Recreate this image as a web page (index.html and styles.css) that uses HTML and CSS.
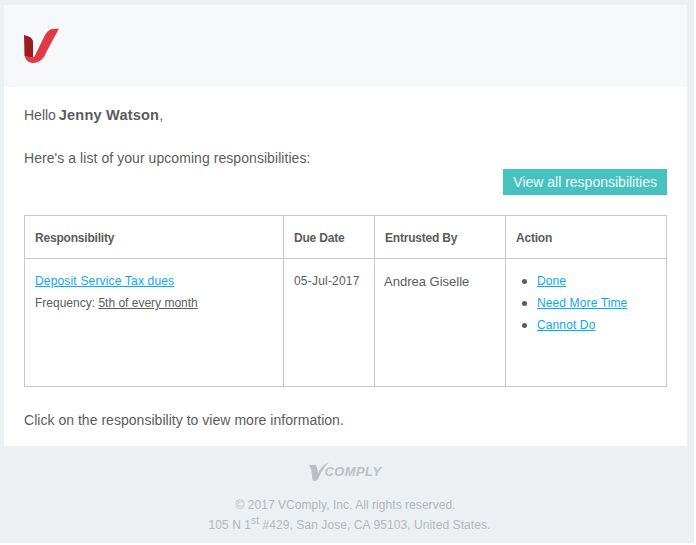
FILE: index.html
```html
<!DOCTYPE html>
<html lang="en">
<head>
<meta charset="utf-8">
<title>VComply</title>
<link rel="stylesheet" href="styles.css">
</head>
<body>
<div class="page">
<div class="mail">
  <header class="head">
    <svg class="logo" width="36" height="36" viewBox="0 0 36 36">
      <path d="M0 7 C3 8 9 9 9 14 L9 29 C6 29.500 3 29 0.500 28 Z" fill="#9c1c22"/>
      <path d="M35 0.500 L28 1 C25 1.500 22 5 20.500 8 L10.500 28.500 L9 29 C6 29.500 3 29 0.800 27.500 C1 32 5 35 9 35 C15 35 19 31 21 27 C25 19 31 8 35 0.500 Z" fill="#e03a42"/>
    </svg>
  </header>
  <main class="body">
    <p class="hello">Hello <b>Jenny Watson</b>,</p>
    <p class="intro">Here's a list of your upcoming responsibilities:</p>
    <div class="cta-row"><a class="cta" href="#">View all responsibilities</a></div>
    <table class="grid">
      <thead>
        <tr><th class="c1">Responsibility</th><th class="c2">Due Date</th><th class="c3">Entrusted By</th><th class="c4">Action</th></tr>
      </thead>
      <tbody>
        <tr>
          <td class="small">
            <a class="task" href="#">Deposit Service Tax dues</a>
            <div class="freq">Frequency: <u>5th of every month</u></div>
          </td>
          <td class="small date">05-Jul-2017</td>
          <td class="name">Andrea Giselle</td>
          <td class="small">
            <ul class="actions">
              <li><a href="#">Done</a></li>
              <li><a href="#">Need More Time</a></li>
              <li><a href="#">Cannot Do</a></li>
            </ul>
          </td>
        </tr>
      </tbody>
    </table>
    <p class="note">Click on the responsibility to view more information.</p>
  </main>
  <footer class="foot">
    <div class="brand">
      <svg class="brand-v" width="20" height="19" viewBox="0 0 20 19">
        <path d="M0 3 L6 3 C7.500 3 8 5 8.500 8 L9 11 C11 7 15 2 20 0 C16 4 12 10 10 15 C9 18 7 19 5.500 19 C4 19 3.500 18 3.300 16 C3 11 2 6 0 3 Z" fill="#bcc0c4"/>
      </svg>
      <span class="brand-word">COMPLY</span>
    </div>
    <p class="copy">© 2017 VComply, Inc. All rights reserved.</p>
    <p class="addr">105 N 1<sup>st</sup> #429, San Jose, CA 95103, United States.</p>
  </footer>
</div>
</div>
</body>
</html>
```
FILE: styles.css
```css
html, body { margin: 0; padding: 0; }
body {
  background: #fff;
  font-family: "Liberation Sans", Arial, sans-serif;
  color: #5c5c5c;
  height: 545px;
  overflow: hidden;
}
.page { width: 694px; height: 543px; padding-top: 5px; box-sizing: border-box; background: #ecf0f3; overflow: hidden; }
.mail { width: 683px; margin-left: 4px; }
.head {
  background: #f7f8fa;
  height: 82px;
  padding: 23px 0 0 20px;
  box-sizing: border-box;
}
.logo { display: block; }
.body {
  background: #fff;
  height: 359px;
  padding: 19px 20px 0 20px;
  box-sizing: border-box;
  font-size: 14px;
}
.body p { margin: 0; line-height: 18px; }
.hello { height: 43px; }
.hello b { font-weight: bold; font-size: 14.500px; letter-spacing: 0.22px; margin-left: -1px; }
.intro { height: 20px; letter-spacing: 0.06px; }
.cta-row { display: flex; justify-content: flex-end; height: 46px; }
.cta {
  background: #47c2bf;
  color: #f0fbfa;
  text-decoration: none;
  height: 26px;
  line-height: 26px;
  padding: 0 10px;
  font-size: 14px;
}
.grid {
  width: 643px;
  border-collapse: collapse;
  table-layout: fixed;
  color: #5c5c5c;
}
.grid th, .grid td { border: 1px solid #c9c9c9; }
.grid th {
  height: 40px;
  padding: 2px 10px 0;
  text-align: left;
  font-size: 12px;
  font-weight: bold;
  letter-spacing: -0.2px;
}
.grid td { height: 113px; vertical-align: top; padding: 14px 10px 0; }
.c1 { width: 238px; }
.c2 { width: 70px; }
.c3 { width: 110px; }
.small { font-size: 12px; line-height: 16px; }
.grid td.name { font-size: 13px; line-height: 16px; height: 112px; padding: 15px 10px 0 9px; }
.grid a { color: #0aa9f5; text-decoration: underline; }
.grid a.task { letter-spacing: 0.17px; }
.date { letter-spacing: 0.2px; }
.freq { margin-top: 6px; }
.actions { margin: 0; padding: 0 0 0 21px; list-style: none; }
.actions li { margin-bottom: 6px; letter-spacing: 0.12px; }
.actions li::before {
  content: "";
  display: inline-block;
  width: 5px;
  height: 5px;
  border-radius: 50%;
  background: #5c5c5c;
  margin: 0 10px 1px -15px;
  vertical-align: middle;
}
.body p.note { margin-top: 24px; letter-spacing: 0.03px; }
.foot {
  background: #ecf0f3;
  height: 97px;
  text-align: center;
  color: #b3b6ba;
  font-size: 12px;
  padding-top: 16px;
  box-sizing: border-box;
}
.brand { display: flex; justify-content: center; align-items: flex-end; height: 19px; }
.brand-v { margin-right: -5px; }
.brand-word {
  font-size: 13px;
  font-weight: bold;
  font-style: italic;
  letter-spacing: 0.4px;
  color: #bcc0c4;
  line-height: 14px;
  margin-bottom: 2px;
}
.foot p { margin: 0; line-height: 20px; }
.foot p.copy { margin-top: 14px; letter-spacing: 0.05px; }
.foot p.addr { letter-spacing: 0.08px; padding-left: 8px; }
sup { font-size: 10px; line-height: 0; }
```
